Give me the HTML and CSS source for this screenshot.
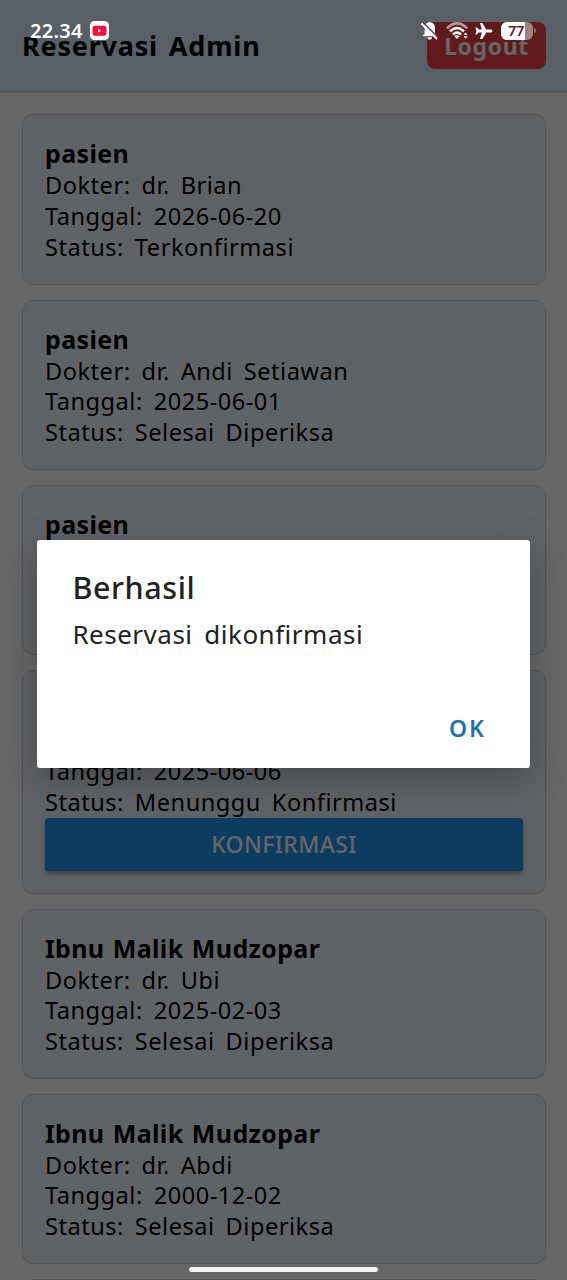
FILE: index.html
```html
<!DOCTYPE html>
<html lang="id">
<head>
<meta charset="utf-8">
<meta name="viewport" content="width=device-width, initial-scale=1">
<title>Reservasi Admin</title>
<link rel="stylesheet" href="styles.css">
</head>
<body>
<div class="screen">
  <header class="header">
    <h1 class="header-title">Reservasi Admin</h1>
    <button class="logout">Logout</button>
  </header>
  <main class="list">
    <article class="card">
      <h2 class="name">pasien</h2>
      <p class="row">Dokter: dr. Brian</p>
      <p class="row">Tanggal: 2026-06-20</p>
      <p class="row">Status: Terkonfirmasi</p>
    </article>
    <article class="card">
      <h2 class="name">pasien</h2>
      <p class="row">Dokter: dr. Andi Setiawan</p>
      <p class="row">Tanggal: 2025-06-01</p>
      <p class="row">Status: Selesai Diperiksa</p>
    </article>
    <article class="card">
      <h2 class="name">pasien</h2>
    </article>
    <article class="card card-pending">
      <p class="row">Tanggal: 2025-06-06</p>
      <p class="row">Status: Menunggu Konfirmasi</p>
      <button class="confirm">KONFIRMASI</button>
    </article>
    <article class="card">
      <h2 class="name">Ibnu Malik Mudzopar</h2>
      <p class="row">Dokter: dr. Ubi</p>
      <p class="row">Tanggal: 2025-02-03</p>
      <p class="row">Status: Selesai Diperiksa</p>
    </article>
    <article class="card">
      <h2 class="name">Ibnu Malik Mudzopar</h2>
      <p class="row">Dokter: dr. Abdi</p>
      <p class="row">Tanggal: 2000-12-02</p>
      <p class="row">Status: Selesai Diperiksa</p>
    </article>
    <article class="card"></article>
  </main>

  <div class="overlay">
    <section class="dialog" role="alertdialog">
      <h2 class="dialog-title">Berhasil</h2>
      <p class="dialog-text">Reservasi dikonfirmasi</p>
      <div class="dialog-actions"><button class="ok">OK</button></div>
    </section>
  </div>

  <div class="statusbar">
    <div class="status-left">
      <span class="clock">22.34</span>
      <svg class="yt" width="19" height="19" viewBox="0 0 19 19"><rect width="19" height="19" rx="4.5" fill="#fff"/><rect x="2.5" y="4.7" width="14" height="10" rx="2.6" fill="#f5113f"/><path d="M8 8v3.400l3-1.700z" fill="#fff"/></svg>
    </div>
    <div class="status-right">
      <svg width="17" height="18" viewBox="0 0 17 18"><path d="M8.800 0.200C12 .2 14 2.600 14 5.600V11.500L15.800 14.300H1.500L3.600 11.500V5.600C3.600 2.600 5.600.2 8.800.2zM6.300 15.300h4.800c0 1.400-1 2.300-2.400 2.300s-2.400-.9-2.400-2.300z" fill="#fff"/><path d="M1.900.400L17.500 15.800" stroke="#5a4148" stroke-width="1.500"/><path d="M.5 1.500L16 17" stroke="#fff" stroke-width="1.900"/></svg>
      <svg class="wifi" width="23" height="18" viewBox="0 0 23 18" fill="none"><path d="M.8 6.400Q11-3.600 21.200 6.400" stroke="#b99a9c" stroke-width="2.500"/><path d="M4 9.400Q11 2.600 18 9.400" stroke="#fff" stroke-width="2.500"/><path d="M7 12.500Q11 8.600 15 12.500" stroke="#fff" stroke-width="2.500"/><path d="M8.400 14.300Q11 12.400 13.600 14.300L11 16.900z" fill="#fff"/><path d="M17.600 13L19.600 10.600 21.600 13zM17.600 14.300L19.600 16.700 21.600 14.300z" fill="#fff"/></svg>
      <svg class="plane" width="18" height="18" viewBox="0 0 19 18"><path d="M18.300 9c0-1-.7-1.600-1.600-1.600h-4.700L7.700.6H5.300l2 6.800H3.800L2.300 5.300H.4L1.500 9 .4 12.700h1.900l1.500-2.100h3.500l-2 6.800h2.400l4.300-6.800h4.700c.9 0 1.600-.6 1.600-1.600z" fill="#fff"/></svg>
      <span class="battery"><span class="level">77</span></span><span class="nub"></span>
    </div>
  </div>
  <div class="home-bar"></div>
</div>
</body>
</html>
```
FILE: styles.css
```css
* { box-sizing: border-box; }
body { margin: 0; font-family: "Noto Sans", sans-serif; color: #000; background: #fff; }
h1, h2, p { margin: 0; white-space: nowrap; }
button { border: 0; padding: 0; font-family: inherit; }
.screen { position: relative; width: 567px; height: 1280px; overflow: hidden; }
.header { height: 93px; padding: 0 21px 0 22px; display: flex; align-items: center; justify-content: space-between; background: #dceeff; border-bottom: 2px solid #ccc; }
.header-title { font-size: 27px; font-weight: 700; line-height: 36px; letter-spacing: 0.8px; word-spacing: 3px; }
.logout { width: 119px; height: 47px; border-radius: 8px; background: #f04146; color: #fff; font-size: 23px; font-weight: 700; letter-spacing: 0.6px; }
.list { display: flex; flex-direction: column; gap: 15px; padding: 21.4px 21px 0 22px; }
.card { flex: none; height: 170.2px; padding: 22px; border: 1px solid #ccd3dc; border-radius: 11px; background: #f0f8ff; }
.name { font-size: 25px; font-weight: 700; line-height: 33px; letter-spacing: 0.35px; word-spacing: 1.5px; }
.row { font-size: 23.6px; line-height: 30.6px; letter-spacing: 0.5px; word-spacing: 4.3px; }
.card-pending { height: 223.7px; display: flex; flex-direction: column; justify-content: flex-end; }
.confirm { height: 53px; flex: none; border-radius: 3px; background: #2196f3; color: #fff; font-size: 23px; font-weight: 500; letter-spacing: 0.4px; box-shadow: 0 3px 5px rgba(0,0,0,.35); }
.overlay { position: absolute; inset: 0; padding: 28px 37px 0 37.4px; display: flex; align-items: center; background: rgba(0,0,0,.6); }
.dialog { width: 100%; height: 228px; padding: 25px 35px; border-radius: 3px; background: #fff; color: #212121; box-shadow: 0 12px 36px rgba(0,0,0,.26); }
.dialog-title { font-size: 30.5px; font-weight: 500; line-height: 44px; letter-spacing: 0.6px; }
.dialog-text { margin-top: 7px; font-size: 26px; line-height: 36px; letter-spacing: 0.5px; word-spacing: 4.5px; }
.dialog-actions { margin-top: 59px; display: flex; justify-content: flex-end; padding-right: 9px; }
.ok { background: none; color: #1b73ae; font-size: 23px; line-height: 34px; font-weight: 600; letter-spacing: 2px; }
.statusbar { position: absolute; top: 18px; left: 0; right: 0; height: 25px; padding: 0 31px 0 30px; display: flex; align-items: center; justify-content: space-between; color: #fff; }
.status-left, .status-right { display: flex; align-items: center; }
.clock { width: 60px; font-size: 20px; line-height: 25px; font-weight: 600; letter-spacing: 0.3px; }
.wifi { margin-left: 8px; }
.plane { margin-left: 6px; }
.battery { width: 32px; height: 18px; margin-left: 8px; border-radius: 6px; overflow: hidden; background: #a08285; }
.level { display: block; width: 24px; height: 18px; padding-left: 7px; background: #fff; color: #611c20; font-size: 14.5px; line-height: 17px; font-weight: 600; letter-spacing: -0.3px; }
.nub { width: 2px; height: 5px; margin-left: 1px; border-radius: 0 2px 2px 0; background: #8f686b; }
.home-bar { position: absolute; left: 189px; top: 1267px; width: 189px; height: 5px; border-radius: 3px; background: #f3f2f2; }
```
